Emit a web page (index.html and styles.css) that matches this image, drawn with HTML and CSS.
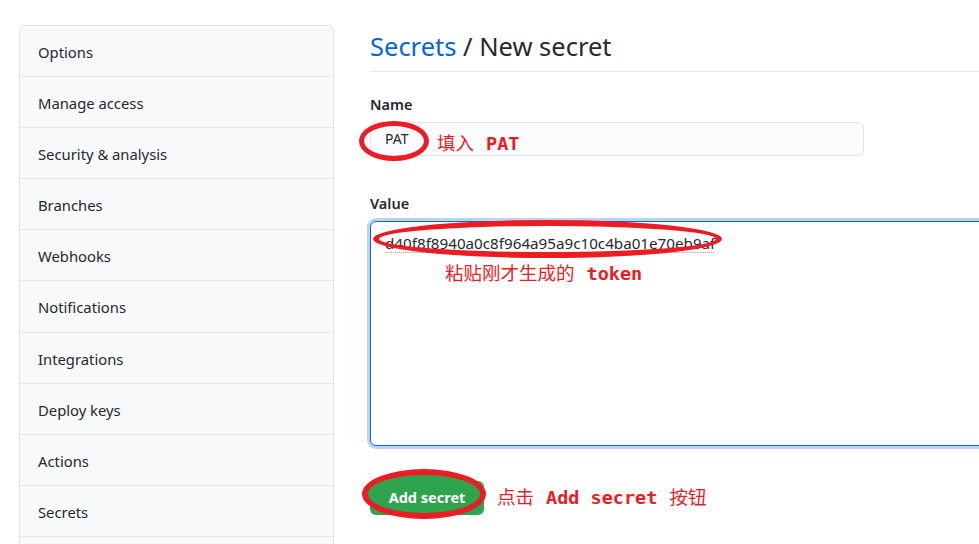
FILE: index.html
```html
<!DOCTYPE html>
<html lang="zh-CN">
<head>
<meta charset="utf-8">
<title>Secrets / New secret</title>
<link rel="stylesheet" href="styles.css">
</head>
<body>
<div class="page">
  <nav class="menu">
    <a class="menu-item">Options</a>
    <a class="menu-item">Manage access</a>
    <a class="menu-item">Security &amp; analysis</a>
    <a class="menu-item">Branches</a>
    <a class="menu-item">Webhooks</a>
    <a class="menu-item">Notifications</a>
    <a class="menu-item">Integrations</a>
    <a class="menu-item">Deploy keys</a>
    <a class="menu-item">Actions</a>
    <a class="menu-item">Secrets</a>
    <a class="menu-item menu-item-empty"></a>
  </nav>
  <main class="content">
    <h1 class="title"><a class="title-link">Secrets</a> / New secret</h1>
    <form class="form">
      <div class="field">
        <label class="label">Name</label>
        <div class="input-wrap">
          <div class="input">PAT</div>
          <span class="ring ring-name"></span>
          <span class="note note-name">填入<b class="mono">PAT</b></span>
        </div>
      </div>
      <div class="field field-value">
        <label class="label">Value</label>
        <div class="input-wrap">
          <div class="textarea"><span class="token">d40f8f8940a0c8f964a95a9c10c4ba01e70eb9af</span></div>
          <span class="ring ring-token"></span>
          <span class="note note-token">粘贴刚才生成的<b class="mono">token</b></span>
        </div>
      </div>
      <div class="actions">
        <button type="button" class="btn"><span class="btn-label">Add secret</span></button>
        <span class="ring ring-btn"></span>
        <span class="note note-btn">点击<b class="mono mono-mid">Add secret</b>按钮</span>
      </div>
    </form>
  </main>
</div>
</body>
</html>
```
FILE: styles.css
```css
html, body {
  margin: 0;
  padding: 0;
  background: #ffffff;
  overflow: hidden;
}
body {
  font-family: "Noto Sans", "Open Sans", sans-serif;
  color: #24292e;
}
.page {
  display: flex;
  align-items: flex-start;
  gap: 36px;
  padding: 25px 0 0 19px;
  width: 1400px;
}
.menu {
  width: 315px;
  flex: none;
  display: flex;
  flex-direction: column;
  background: #f8f9fb;
  border: 1px solid #e1e4e8;
  border-radius: 6px;
  box-sizing: border-box;
}
.menu-item {
  display: block;
  height: 50.1px;
  line-height: 52px;
  padding-left: 18px;
  font-size: 14.8px;
  color: #24292e;
  border-bottom: 1px solid #e6e8eb;
  overflow: hidden;
}
.menu-item:last-child {
  border-bottom: none;
}
.content {
  width: 900px;
  flex: none;
}
.title {
  margin: 5px 0 0 0;
  padding-bottom: 9px;
  border-bottom: 1px solid #e6e8eb;
  font-size: 25.5px;
  line-height: 32px;
  font-weight: 400;
  color: #24292e;
}
.title-link {
  color: #0366d6;
}
.form {
  display: flex;
  flex-direction: column;
}
.field {
  margin-top: 22px;
  display: flex;
  flex-direction: column;
  gap: 8px;
}
.field-value {
  margin-top: 37px;
}
.label {
  font-size: 14.5px;
  line-height: 20px;
  font-weight: 600;
}
.input-wrap {
  position: relative;
}
.input {
  width: 494px;
  height: 34px;
  box-sizing: border-box;
  background: #fafbfc;
  border: 1px solid #e1e4e8;
  border-radius: 6px;
  padding-left: 14px;
  font-size: 14px;
  line-height: 32px;
}
.textarea {
  width: 700px;
  height: 225px;
  box-sizing: border-box;
  border: 1px solid #0366d6;
  border-radius: 6px;
  box-shadow: 0 0 0 3px rgba(3, 102, 214, 0.28);
  padding: 11px 0 0 14px;
  font-size: 15.2px;
  line-height: 20px;
}
.token {
  text-decoration: underline dotted #ef8a8e;
  text-decoration-thickness: 1px;
  text-underline-offset: 3px;
}
.ring {
  position: absolute;
  box-sizing: border-box;
  border: 5px solid #ec1c24;
  border-radius: 50%;
}
.ring-name {
  left: -11px;
  top: -1px;
  width: 70px;
  height: 40px;
}
.ring-token {
  left: 3px;
  top: -1px;
  width: 349px;
  height: 38px;
  border-width: 6px;
}
.note {
  position: absolute;
  color: #ec1c24;
  font-family: "Noto Sans CJK SC", sans-serif;
  font-size: 18.5px;
  line-height: 24px;
  white-space: nowrap;
}
.mono {
  font-family: "DejaVu Sans Mono", "Liberation Mono", monospace;
  font-weight: 700;
  font-size: 18.5px;
  margin-left: 12px;
}
.mono-mid {
  margin-right: 12px;
}
.note-name {
  left: 67px;
  top: 8px;
}
.note-token {
  left: 75px;
  top: 39px;
}
.actions {
  position: relative;
  margin-top: 35px;
  height: 34px;
}
.btn {
  width: 114px;
  height: 34px;
  border: none;
  border-radius: 6px;
  background: #2ea44f;
  color: #ffffff;
  font-family: "Noto Sans", sans-serif;
  font-size: 14.5px;
  font-weight: 700;
  padding: 0;
}
.btn-label {
  position: relative;
  z-index: 2;
  top: -1px;
}
.ring-btn {
  left: -8px;
  top: -12px;
  width: 124px;
  height: 50px;
  border-width: 6px;
  background: #2ea44f;
  z-index: 1;
}
.note-btn {
  left: 127px;
  top: 3px;
}
```
